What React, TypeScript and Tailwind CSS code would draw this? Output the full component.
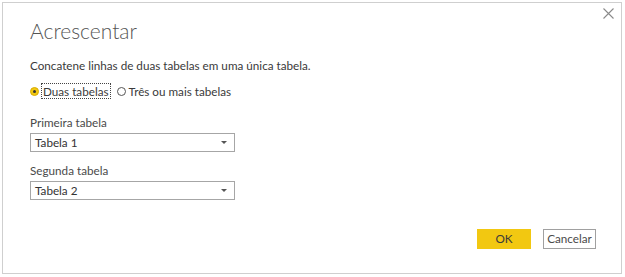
function Radio({ checked, label, focused }: { checked?: boolean; label: string; focused?: boolean }) {
  return (
    <label className="flex items-center gap-[3px]">
      {checked ? (
        <span className="w-[9px] h-[9px] rounded-full bg-[#f2c811] border border-[#d8ac00] flex items-center justify-center">
          <span className="w-[3px] h-[3px] rounded-full bg-[#333]" />
        </span>
      ) : (
        <span className="w-[9px] h-[9px] rounded-full border-[1.5px] border-[#555] bg-white" />
      )}
      <span className={focused ? 'px-[1px] outline outline-1 outline-dotted outline-[#444] leading-[14px]' : 'leading-[14px]'}>
        {label}
      </span>
    </label>
  )
}

function Select({ value }: { value: string }) {
  return (
    <div className="w-[205px] h-[19px] border border-[#a6a6a6] bg-white flex items-center justify-between pl-[4px] pr-[7px]">
      <span className="text-[11.7px] text-[#333]">{value}</span>
      <svg width="6" height="3" viewBox="0 0 6 3">
        <path d="M0 0 L6 0 L3 3 Z" fill="#555" />
      </svg>
    </div>
  )
}

export default function App() {
  return (
    <div
      className="w-[625px] h-[277px] bg-white p-[2px] pr-[3px] pb-[3px]"
      style={{ fontFamily: '"Segoe UI", "Lato", "Liberation Sans", sans-serif' }}
    >
      <div className="relative w-full h-full border border-[#cfcfcf] bg-white">
        <button className="absolute right-[7px] top-[5px]">
          <svg width="11" height="11" viewBox="0 0 11 11">
            <path d="M0.5 0.5 L10.5 10.5 M10.5 0.5 L0.5 10.5" stroke="#8a8a8a" strokeWidth="1.1" />
          </svg>
        </button>

        <div className="pl-[27px] pr-[25px] pt-[14px]">
          <h1 className="text-[21px] font-light text-[#555] leading-[28px]">Acrescentar</h1>

          <p className="mt-[12px] text-[11.7px] text-[#3a3a3a] leading-[16px]">
            Concatene linhas de duas tabelas em uma única tabela.
          </p>

          <div className="mt-[11px] flex items-center gap-[7px] text-[11.7px] text-[#3a3a3a]">
            <Radio checked focused label="Duas tabelas" />
            <Radio label="Três ou mais tabelas" />
          </div>

          <div className="mt-[16px] text-[11.7px] text-[#4a4a4a] leading-[16px]">Primeira tabela</div>
          <div className="mt-[3px]">
            <Select value="Tabela 1" />
          </div>

          <div className="mt-[10px] text-[11.7px] text-[#4a4a4a] leading-[16px]">Segunda tabela</div>
          <div className="mt-[3px]">
            <Select value="Tabela 2" />
          </div>

          <div className="mt-[29px] flex justify-end gap-[12px]">
            <button className="w-[54px] h-[20px] bg-[#f2c811] text-[11.7px] text-[#3a3a3a] leading-none">OK</button>
            <button className="w-[53px] h-[20px] border border-[#a0a0a0] bg-white text-[11.7px] text-[#4a4a4a] leading-none">
              Cancelar
            </button>
          </div>
        </div>
      </div>
    </div>
  )
}
